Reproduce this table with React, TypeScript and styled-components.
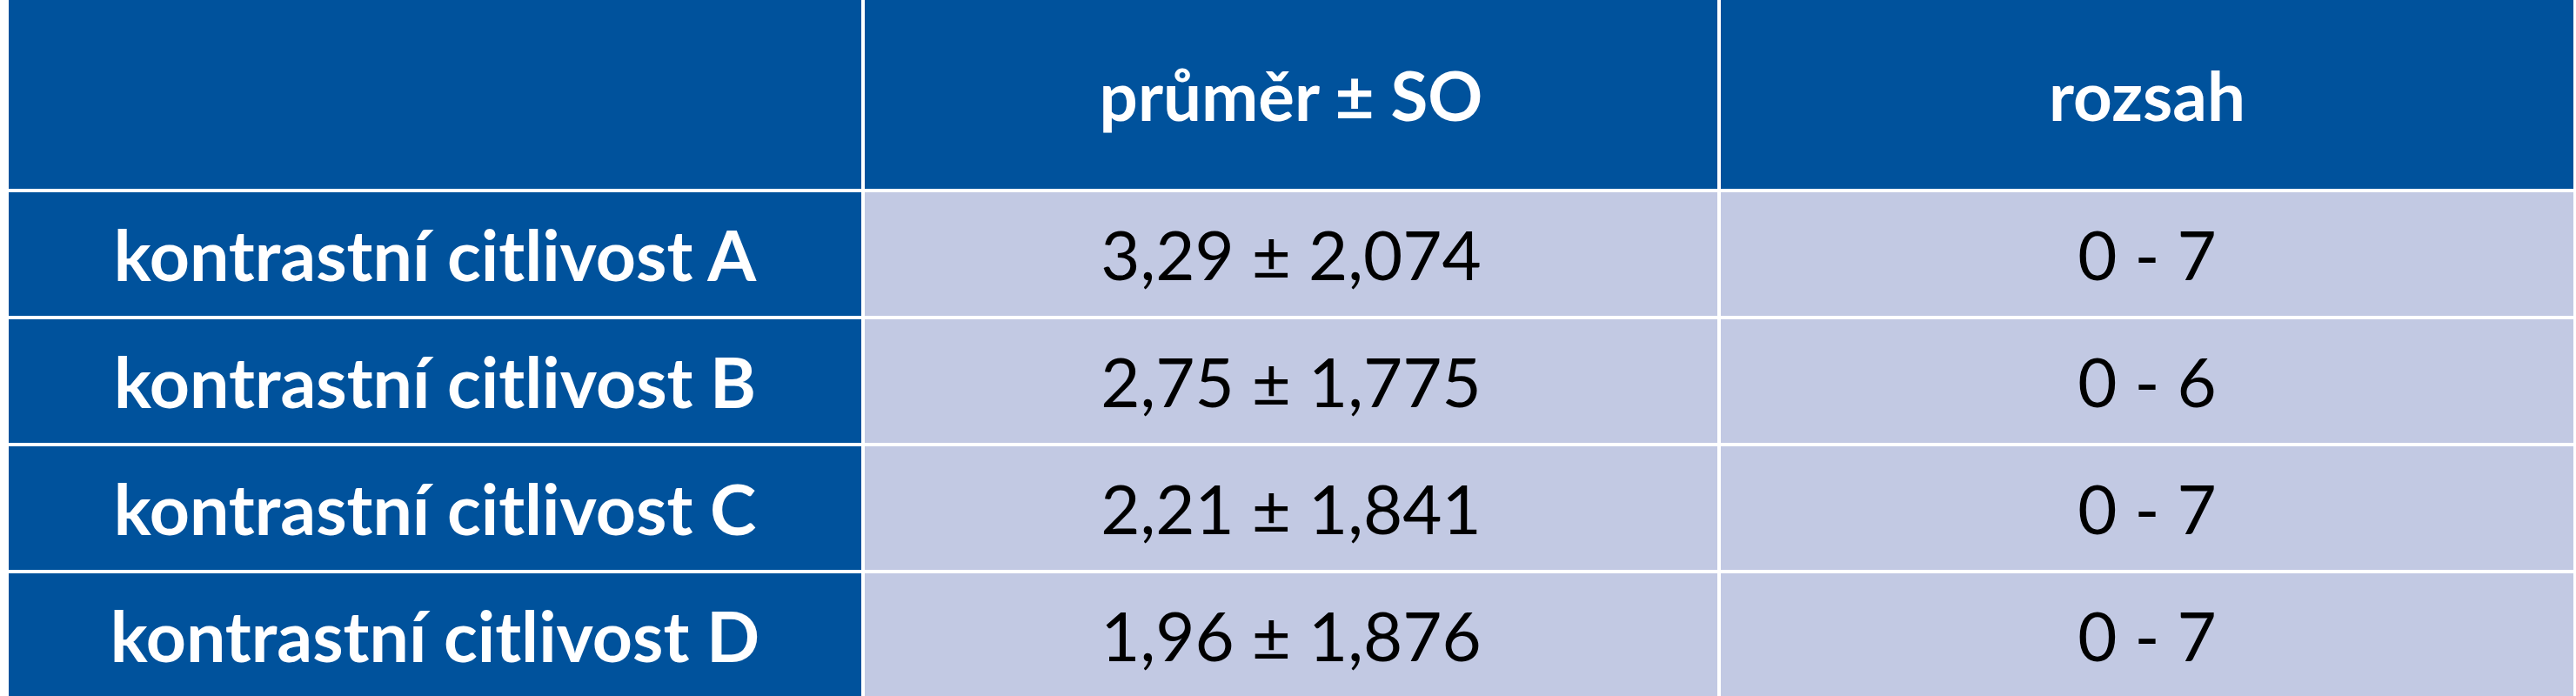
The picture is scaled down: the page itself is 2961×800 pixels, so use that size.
import React from "react";
import styled, { createGlobalStyle } from "styled-components";

const Global = createGlobalStyle`
  html, body {
    margin: 0;
    padding: 0;
    background: #ffffff;
    overflow: hidden;
  }
`;

const Page = styled.div`
  width: 2961px;
  height: 800px;
  padding-left: 10px;
  box-sizing: border-box;
  background: #ffffff;
`;

const Grid = styled.div`
  display: grid;
  grid-template-columns: repeat(3, 980px);
  grid-template-rows: 217px repeat(4, 142px);
  column-gap: 4px;
  row-gap: 4px;
  font-family: Lato, "Liberation Sans", sans-serif;
`;

type Kind = "head" | "label" | "value";

const Cell = styled.div<{ $kind: Kind }>`
  display: flex;
  align-items: center;
  justify-content: center;
  background: ${(p) => (p.$kind === "value" ? "#c2c9e3" : "#00529c")};
  color: ${(p) => (p.$kind === "value" ? "#000000" : "#ffffff")};
  font-weight: ${(p) => (p.$kind === "value" ? 400 : 700)};
  font-size: ${(p) => (p.$kind === "label" ? "80.5px" : "78px")};
  line-height: 1;
  white-space: nowrap;
`;

const rows = [
  { label: "kontrastní citlivost A", mean: "3,29 ± 2,074", range: "0 - 7" },
  { label: "kontrastní citlivost B", mean: "2,75 ± 1,775", range: "0 - 6" },
  { label: "kontrastní citlivost C", mean: "2,21 ± 1,841", range: "0 - 7" },
  { label: "kontrastní citlivost D", mean: "1,96 ± 1,876", range: "0 - 7" },
];

export default function App() {
  return (
    <>
      <Global />
      <Page>
        <Grid>
          <Cell $kind="head" />
          <Cell $kind="head">průměr ± SO</Cell>
          <Cell $kind="head">rozsah</Cell>
          {rows.map((r) => (
            <React.Fragment key={r.label}>
              <Cell $kind="label">{r.label}</Cell>
              <Cell $kind="value">{r.mean}</Cell>
              <Cell $kind="value">{r.range}</Cell>
            </React.Fragment>
          ))}
        </Grid>
      </Page>
    </>
  );
}
